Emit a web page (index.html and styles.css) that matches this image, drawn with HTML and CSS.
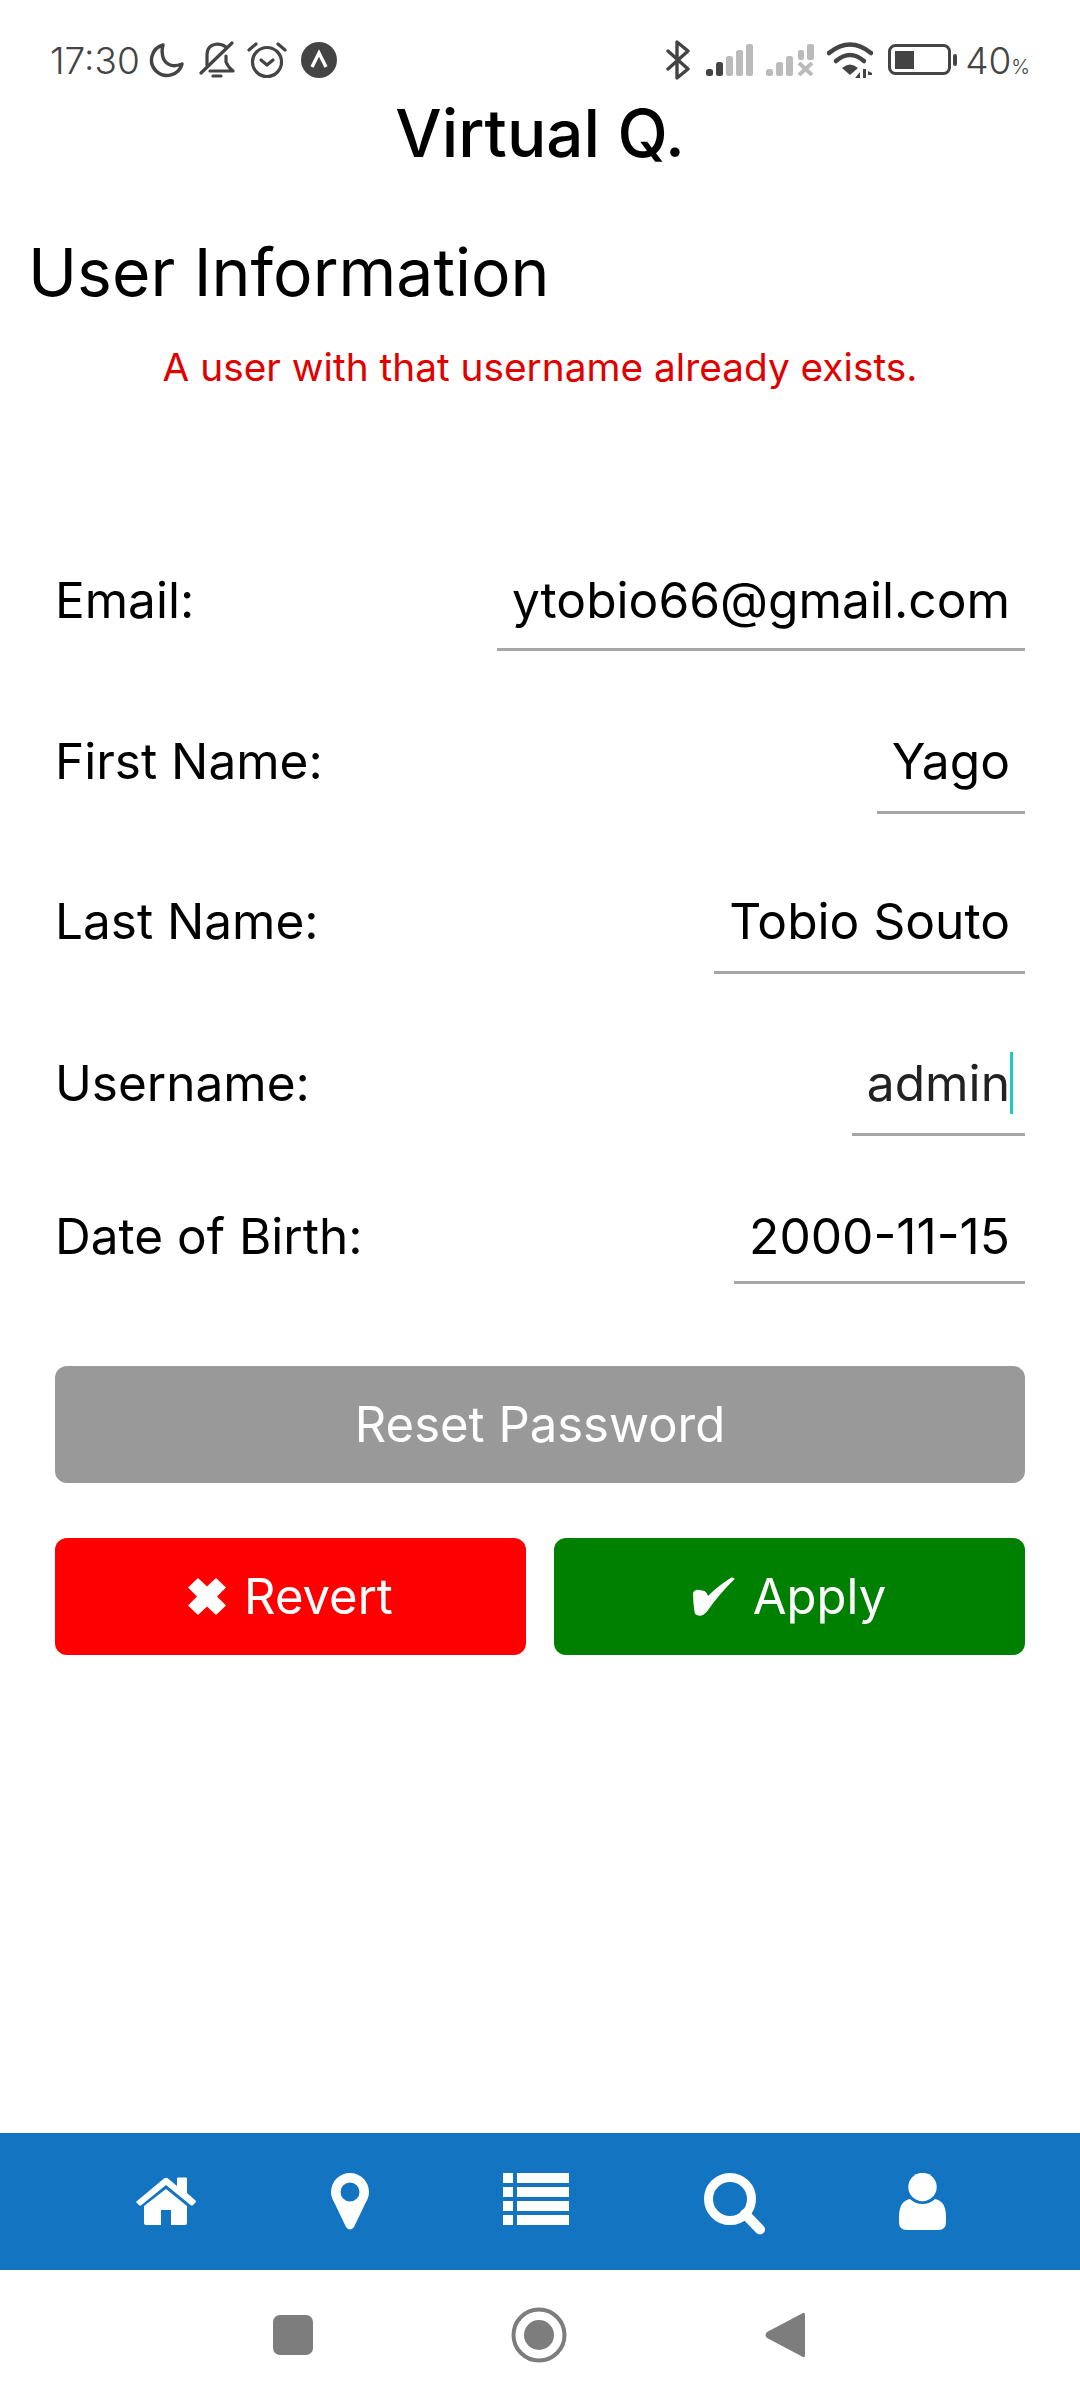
FILE: index.html
```html
<!DOCTYPE html>
<html lang="en">
<head>
    <meta charset="UTF-8">
    <meta name="viewport" content="width=device-width, initial-scale=1.0">
    <title>Virtual Q.</title>
    <link rel="stylesheet" href="styles.css">
</head>
<body>
    <div class="page">
        <!-- status bar -->
        <div class="status-bar">
            <div class="status-left">
                <span class="time">17:30</span>
                <svg class="st-moon" width="36" height="36" viewBox="0 0 36 36"><path d="M14 3 A15.5 15.5 0 1 0 33 22 Q20 27 14.5 17 Q12 10 14 3 Z" fill="none" stroke="#444" stroke-width="3.4" stroke-linejoin="round"/></svg>
                <svg class="st-bell" width="36" height="38" viewBox="0 0 36 38"><g fill="none" stroke="#444" stroke-width="3.2" stroke-linecap="round" stroke-linejoin="round"><path d="M8 24 V14 Q8 4 18 3 Q23 3 27 6"/><path d="M27 15 V21 Q29 26 34 30 H11"/><path d="M2 32 L33 2"/><path d="M14 35 H22"/></g></svg>
                <svg class="st-alarm" width="40" height="38" viewBox="0 0 40 38"><g fill="none" stroke="#444" stroke-width="3.2" stroke-linecap="round" stroke-linejoin="round"><circle cx="20" cy="21" r="14.5"/><path d="M14 19 L20 24 L26 19"/><path d="M2 9 L9 3"/><path d="M38 9 L31 3"/></g></svg>
                <svg class="st-expo" width="36" height="38" viewBox="0 0 36 38"><circle cx="18" cy="19" r="18" fill="#444"/><path d="M11 26 L18 12 L25 26" fill="none" stroke="#fff" stroke-width="3.4"/></svg>
            </div>
            <div class="status-right">
                <svg class="st-bt" width="24" height="40" viewBox="0 0 24 40"><path d="M2 11 L22 29 L11 38 V2 L22 11 L2 29" fill="none" stroke="#444" stroke-width="3.4" stroke-linecap="round" stroke-linejoin="round"/></svg>
                <svg class="st-signal" width="48" height="32" viewBox="0 0 48 32"><rect x="0" y="25" width="7" height="7" rx="2.5" fill="#444"/><rect x="10" y="18" width="7" height="14" rx="2.5" fill="#444"/><rect x="20" y="12" width="7" height="20" rx="2.5" fill="#bbb"/><rect x="30" y="6" width="7" height="26" rx="2.5" fill="#bbb"/><rect x="40" y="0" width="7" height="32" rx="2.5" fill="#bbb"/></svg>
                <svg class="st-signal" width="48" height="32" viewBox="0 0 48 32"><g fill="#bbb"><rect x="0" y="25" width="7" height="7" rx="2.5"/><rect x="10" y="18" width="7" height="14" rx="2.5"/><rect x="20" y="12" width="7" height="20" rx="2.5"/><rect x="32" y="6" width="6" height="10" rx="2"/><rect x="41" y="0" width="7" height="16" rx="2"/></g><path d="M33 19 L46 31 M46 19 L33 31" stroke="#bbb" stroke-width="4"/></svg>
                <svg class="st-wifi" width="46" height="36" viewBox="0 0 46 36"><g fill="none" stroke="#444" stroke-width="4.5" stroke-linecap="round"><path d="M2 11 Q23 -6 44 11"/><path d="M9 19 Q23 7 37 19"/></g><path d="M15 26 Q23 19 31 26 L23 33 Z" fill="#444"/><path d="M28 36 L33 30 V36 Z M36 27 H39 V36 H36 Z M41 29 L45 31 V33 H41 Z" fill="#444"/></svg>
                <svg class="st-battery" width="70" height="32" viewBox="0 0 70 32"><rect x="1.5" y="1.5" width="60" height="28" rx="6" fill="none" stroke="#444" stroke-width="3"/><rect x="7" y="7" width="19" height="18" fill="#444"/><rect x="65" y="10" width="4" height="12" rx="2" fill="#444"/></svg>
                <span class="batt">40<small>%</small></span>
            </div>
        </div>

        <h1 class="app-title">Virtual Q.</h1>
        <h2 class="section-title">User Information</h2>
        <p class="error">A user with that username already exists.</p>

        <!-- form -->
        <div class="form">
            <div class="row row-email"><span class="label">Email:</span><span class="field">ytobio66@gmail.com</span></div>
            <div class="row row-first"><span class="label">First Name:</span><span class="field">Yago</span></div>
            <div class="row row-last"><span class="label">Last Name:</span><span class="field">Tobio Souto</span></div>
            <div class="row row-user"><span class="label">Username:</span><span class="field field-active">admin<i class="caret"></i></span></div>
            <div class="row row-date"><span class="label">Date of Birth:</span><span class="field">2000-11-15</span></div>

            <button class="btn btn-reset">Reset Password</button>
            <div class="btn-row">
                <button class="btn btn-revert">
                    <svg width="38" height="37" viewBox="0 0 38 37"><path d="M10 0 L19 8.5 L28 0 L38 9.5 L29 18.5 L38 27.5 L28 37 L19 28.5 L10 37 L0 27.5 L9 18.5 L0 9.5 Z" fill="#fff"/></svg>
                    Revert
                </button>
                <button class="btn btn-apply">
                    <svg width="42" height="39" viewBox="0 0 42 39"><path d="M0 16 Q1 13 5 12.7 L11.5 14 Q14 15.5 15 19 Q26 8 38.5 .5 Q41 0 41.7 2 Q27 16 14 34.5 Q10 39 6.5 38.7 Q2.5 38 1.7 36 Q0 26 0 16 Z" fill="#fff"/></svg>
                    Apply
                </button>
            </div>
        </div>

        <!-- tab bar -->
        <nav class="tabs">
            <a class="tab tab-home"><svg width="60" height="48" viewBox="0 0 60 48"><g fill="#fff"><path d="M1 24 L28 1.5 Q30 0 32 1.5 L41 9 V1.5 Q41 .5 42 .5 H50 Q51 .5 51 1.5 V16 L59.5 23.5 Q60.5 25 59 26 L57 28 Q56 29 54.5 28 L30 8 L5.5 28 Q4 29 3 28 L1 26 Q-.5 25 1 24 Z"/><path d="M30 12 L51 29 V46 Q51 48 49 48 H35 V33 H25 V48 H10 Q8 48 8 46 V29 Z"/></g></svg></a>
            <a class="tab"><svg width="38" height="57" viewBox="0 0 38 57"><path fill-rule="evenodd" fill="#fff" d="M19 0 A19 19 0 0 1 38 19 C38 24 36 27 34 31 L23 54 Q19 59 15 54 L4 31 C2 27 0 24 0 19 A19 19 0 0 1 19 0 Z M19 9.5 A9.5 9.5 0 1 0 19 28.5 A9.5 9.5 0 1 0 19 9.5 Z"/></svg></a>
            <a class="tab"><svg width="66" height="52" viewBox="0 0 66 52"><g fill="#fff"><rect x="0" y="0" width="10" height="10"/><rect x="14" y="0" width="52" height="10"/><rect x="0" y="14" width="10" height="10"/><rect x="14" y="14" width="52" height="10"/><rect x="0" y="28" width="10" height="10"/><rect x="14" y="28" width="52" height="10"/><rect x="0" y="42" width="10" height="10"/><rect x="14" y="42" width="52" height="10"/></g></svg></a>
            <a class="tab"><svg width="61" height="62" viewBox="0 0 61 62"><circle cx="26" cy="26" r="21.5" fill="none" stroke="#fff" stroke-width="9"/><path d="M41 41 L56 56.5" stroke="#fff" stroke-width="10" stroke-linecap="round"/></svg></a>
            <a class="tab"><svg width="47" height="57" viewBox="0 0 47 57"><g fill="#fff"><circle cx="23.5" cy="14" r="14.2"/><path d="M11 26 Q16 31 23.5 31 Q31 31 36 26 Q47 28 47 44 V49 Q47 57 39 57 H8 Q0 57 0 49 V44 Q0 28 11 26 Z"/></g></svg></a>
        </nav>

        <!-- android buttons -->
        <div class="sys-nav">
            <svg width="40" height="40" viewBox="0 0 40 40"><rect width="40" height="40" rx="7" fill="#7d7d7d"/></svg>
            <svg width="56" height="56" viewBox="0 0 56 56"><circle cx="28" cy="28" r="25.5" fill="none" stroke="#7d7d7d" stroke-width="4"/><circle cx="28" cy="28" r="15" fill="#7d7d7d"/></svg>
            <svg width="40" height="46" viewBox="0 0 40 46"><path d="M38 1 Q40 0 40 3 V43 Q40 46 38 45 L2 26 Q-1 23 2 20 Z" fill="#7d7d7d"/></svg>
        </div>
    </div>
</body>
</html>
```

FILE: styles.css
```css
* {
    box-sizing: border-box;
}
body {
    margin: 0;
    background-color: #fff;
    color: #000;
    font-family: Inter, "Open Sans", sans-serif;
}
.page {
    width: 1080px;
    height: 2400px;
    display: flex;
    flex-direction: column;
}
.status-bar {
    height: 96px;
    padding: 40px 50px 0 50px;
    display: flex;
    justify-content: space-between;
    align-items: flex-start;
    color: #444;
}
.status-left, .status-right {
    display: flex;
    align-items: center;
    height: 40px;
}
.time {
    font-size: 37px;
    font-weight: 300;
    margin-right: 9px;
}
.st-bell, .st-expo {
    margin-left: 14px;
}
.st-alarm {
    margin-left: 12px;
}
.st-signal {
    margin-left: 12px;
}
.st-bt + .st-signal {
    margin-left: 16px;
}
.st-wifi {
    margin-left: 13px;
}
.st-battery {
    margin-left: 15px;
}
.batt {
    font-size: 37px;
    font-weight: 300;
    margin-left: 7px;
}
.batt small {
    font-size: 20px;
}
.app-title {
    margin: 0;
    height: 76px;
    line-height: 76px;
    font-size: 65.5px;
    font-weight: 500;
    text-align: center;
}
.section-title {
    margin: 58px 0 0;
    padding-left: 28px;
    font-size: 66px;
    font-weight: 400;
    line-height: 84px;
}
.error {
    margin: 29px 0 0;
    color: #e00000;
    font-size: 38.8px;
    line-height: 48px;
    text-align: center;
}
.form {
    padding: 0 55px;
    flex: 1;
}
.row {
    display: flex;
    justify-content: space-between;
    align-items: center;
    height: 104px;
    font-size: 49.7px;
}
.row-email {
    height: 100px;
    margin-top: 160px;
}
.row-first {
    margin-top: 59px;
}
.row-last {
    margin-top: 56px;
}
.row-user {
    margin-top: 58px;
}
.row-date {
    height: 94px;
    margin-top: 54px;
}
.label {
    line-height: 60px;
    margin-bottom: 2px;
    font-size: 49.5px;
}
.field {
    position: relative;
    height: 100%;
    padding: 0 15px;
    display: flex;
    align-items: center;
    border-bottom: 3px solid #a6a6a6;
}
.caret {
    position: absolute;
    right: 12px;
    top: 20px;
    width: 3px;
    height: 62px;
    background-color: #1fc9c0;
}
.field-active {
    color: #222;
}
.btn {
    display: flex;
    justify-content: center;
    align-items: center;
    gap: 18px;
    width: 100%;
    height: 117px;
    border: none;
    border-radius: 12px;
    color: #fff;
    font-family: inherit;
    font-size: 49px;
    font-weight: 400;
}
.btn-reset {
    margin-top: 82px;
    background-color: #999;
}
.btn-row {
    display: flex;
    gap: 28px;
    margin-top: 55px;
}
.btn-revert {
    background-color: #f00;
}
.btn-apply {
    background-color: #008000;
}
.tabs {
    height: 137px;
    padding: 40px 0 0 2px;
    background-color: #1375c1;
    display: flex;
    justify-content: center;
    align-items: flex-start;
    gap: 134.5px;
}
.tab {
    display: flex;
}
.tab-home {
    margin-top: 4px;
}
.sys-nav {
    height: 130px;
    padding-right: 2px;
    display: flex;
    justify-content: center;
    align-items: center;
    gap: 198px;
}
```
